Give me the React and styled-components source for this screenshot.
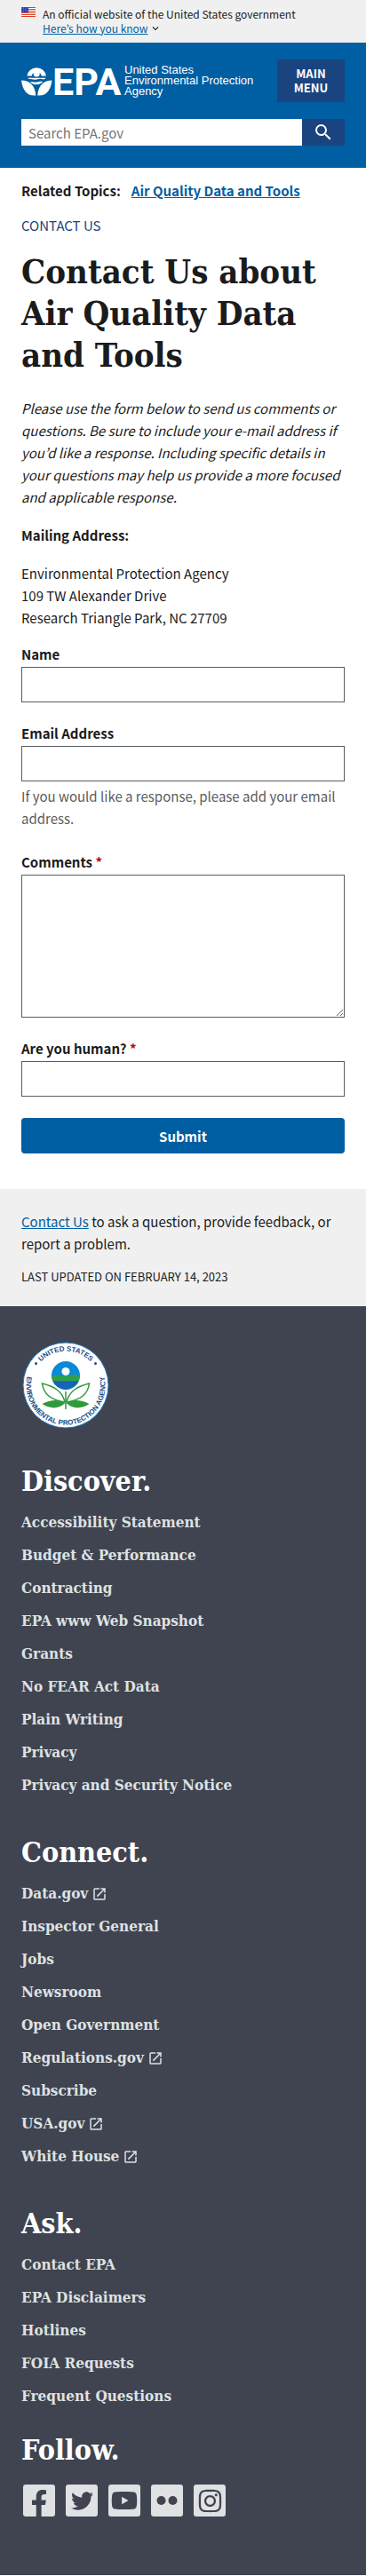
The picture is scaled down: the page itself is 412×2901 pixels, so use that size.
import React from "react";
import styled, { createGlobalStyle } from "styled-components";
import { MdSearch, MdOpenInNew, MdExpandMore } from "react-icons/md";
import { FaFacebookF, FaTwitter, FaYoutube, FaInstagram } from "react-icons/fa";

const sans = `"Noto Sans CJK KR", "Noto Sans", sans-serif`;
const serif = `"DejaVu Serif Condensed", "DejaVu Serif", serif`;

const GlobalStyle = createGlobalStyle`
  *, *::before, *::after { box-sizing: border-box; }
  body {
    margin: 0;
    background: #fff;
    color: #1b1b1b;
    font-family: ${sans};
    font-size: 15px;
    line-height: 25px;
  }
  button, input, textarea { font: inherit; border-radius: 0; margin: 0; }
`;

const Banner = styled.section`
  display: flex;
  gap: 8px;
  padding: 8px 24px;
  background: #f0f0f0;
  font-size: 12px;
  line-height: 16px;
`;

const FlagIcon = styled.svg`
  flex: none;
  width: 16px;
  height: 11px;
`;

const BannerToggle = styled.button`
  display: flex;
  align-items: center;
  gap: 2px;
  padding: 0;
  border: 0;
  background: none;
  color: #005ea2;
  cursor: pointer;

  span { text-decoration: underline; }
  svg { color: #1b1b1b; }
`;

const Header = styled.header`
  display: flex;
  flex-direction: column;
  gap: 19px;
  padding: 19px 24px 25px;
  background: #005ea2;
`;

const HeaderTop = styled.div`
  display: flex;
  align-items: center;
  justify-content: space-between;
`;

const LogoLink = styled.a`
  display: flex;
  align-items: center;
  gap: 3px;
  color: #fff;
  text-decoration: none;
`;

const LogoMark = styled.svg`
  width: 113px;
  height: 36px;
  overflow: visible;
`;

const Tagline = styled.span`
  font: 13px/12px "Liberation Sans", sans-serif;
  white-space: nowrap;
`;

const MenuButton = styled.button`
  width: 76px;
  padding: 8px;
  border: 0;
  background: #1a4480;
  color: #fff;
  font-size: 13px;
  font-weight: 700;
  line-height: 16px;
  text-transform: uppercase;
  cursor: pointer;
`;

const SearchForm = styled.form`
  display: flex;
  height: 30px;
`;

const SearchInput = styled.input`
  flex: 1;
  min-width: 0;
  padding: 0 8px;
  border: 0;
  background: #fff;

  &::placeholder { color: #757575; opacity: 1; }
`;

const SearchButton = styled.button`
  display: grid;
  place-items: center;
  width: 48px;
  padding: 0;
  border: 0;
  background: #1a4480;
  color: #fff;
`;

const Main = styled.main`
  padding: 13px 24px 40px;
`;

const TextLink = styled.a`
  color: #005ea2;
`;

const RelatedTopics = styled.p`
  display: flex;
  gap: 12px;
  margin: 0 0 14px;
  font-weight: 700;
`;

const WebArea = styled.p`
  margin: 0;
  color: #1a4480;
  text-transform: uppercase;
`;

const PageTitle = styled.h1`
  margin: 16px 0 24px;
  font-family: ${serif};
  font-size: 38px;
  font-weight: 700;
  line-height: 47px;
`;

const Paragraph = styled.p`
  margin: 0 0 18px;
  font-style: ${(p) => (p.$emphasis ? "italic" : "normal")};
  font-weight: ${(p) => (p.$strong ? 700 : 400)};
`;

const Form = styled.form`
  display: flex;
  flex-direction: column;
  gap: 24px;
`;

const Field = styled.div`
  display: flex;
  flex-direction: column;
`;

const Label = styled.label`
  margin-bottom: 3px;
  font-weight: 700;
  line-height: 22px;
`;

const Required = styled.abbr`
  color: #b50909;
  text-decoration: none;
`;

const TextInput = styled.input`
  width: 100%;
  height: 40px;
  padding: 8px;
  border: 1px solid #565c65;
  background: #fff;
`;

const TextArea = styled.textarea`
  width: 100%;
  height: 161px;
  padding: 8px;
  border: 1px solid #565c65;
  background: #fff;
  resize: vertical;
`;

const Hint = styled.span`
  padding: 4px 0 2px;
  color: #5c5c5c;
`;

const SubmitButton = styled.button`
  width: 100%;
  height: 40px;
  padding: 0;
  border: 0;
  border-radius: 4px;
  background: #005ea2;
  color: #fff;
  font-weight: 700;
`;

const PageFooter = styled.section`
  padding: 24px 24px 21px;
  background: #f0f0f0;
`;

const Updated = styled.p`
  margin: 12px 0 0;
  font-size: 13px;
  text-transform: uppercase;
`;

const Footer = styled.footer`
  padding: 39px 24px 66px;
  background: #3f4450;
  color: #dfe1e2;
`;

const Seal = styled.svg`
  display: block;
  width: 100px;
  height: 100px;
  margin-bottom: 40px;
`;

const FooterSection = styled.section`
  margin-bottom: ${(p) => (p.$tight ? 32 : 47)}px;
`;

const FooterHeading = styled.h2`
  margin: 0 0 18px;
  color: #fff;
  font-family: ${serif};
  font-size: 32px;
  font-weight: 700;
  line-height: 36px;
`;

const LinkList = styled.ul`
  display: flex;
  flex-direction: column;
  gap: 16px;
  margin: 0;
  padding: 0;
  list-style: none;
`;

const FooterLink = styled.a`
  display: inline-flex;
  align-items: center;
  gap: 4px;
  color: #dfe1e2;
  font-family: ${serif};
  font-size: 17px;
  font-weight: 700;
  line-height: 21px;
  text-decoration: none;
  vertical-align: top;
`;

const LinkItem = styled.li`
  line-height: 21px;
`;

const SocialList = styled.ul`
  display: flex;
  gap: 12px;
  margin: 0;
  padding: 3px 2px 0;
  list-style: none;
`;

const SocialLink = styled.a`
  display: flex;
  align-items: ${(p) => (p.$bottom ? "flex-end" : "center")};
  justify-content: center;
  width: 36px;
  height: 36px;
  overflow: hidden;
  border-radius: 3px;
  background: #dfe1e2;
  color: #3f4450;
`;

const Flag = () => (
  <FlagIcon viewBox="0 0 16 11" aria-hidden="true">
    <rect width="16" height="11" fill="#fff" />
    {[0, 2, 4, 6, 8, 10].map((y) => (
      <rect key={y} y={y} width="16" height="1" fill="#db3e1f" />
    ))}
    <rect width="8" height="6" fill="#1e33b1" />
    {[1, 3, 5].map((y) =>
      [1, 3, 5, 7].map((x) => <circle key={`${x}-${y}`} cx={x - (y === 3 ? 0 : 0.4)} cy={y} r="0.45" fill="#fff" />)
    )}
  </FlagIcon>
);

const EpaLogo = () => (
  <LogoMark viewBox="0 0 113 36" role="img" aria-label="EPA">
    <g fill="#fff">
      <path d="M6.5 12.5a10.8 10.8 0 0 1 21.4 0h-5.2a5.6 5.6 0 0 0-11 0z" />
      <circle cx="17.2" cy="10" r="3.6" />
      <path d="M7 14.8h20.5c-1 1.8-2.6 1.6-4.6 1.2-3.6-.8-5 1.3-9 .5-2.6-.5-5.4.2-6.9-1.7z" />
      <path d="M10 19.5c2.6-.8 4 .4 7 .1 2.8-.3 4.2-1.2 7.2-.6-3.6 4-10.2 4.500-14.2.5z" />
      <path d="M0 17.5c9 0 15.5 5.5 16.3 17C6.5 35.5 1.5 29 0 17.5z" />
      <path d="M34.5 17.5c-9 0-15.500 5.5-16.3 17 9.8 1 14.8-5.5 16.3-17z" />
    </g>
    <text x="35" y="34" fill="#fff" fontFamily="'Liberation Sans Narrow', Roboto, sans-serif" fontSize="43" fontWeight="700">
      EPA
    </text>
  </LogoMark>
);

const EpaSeal = () => (
  <Seal viewBox="0 0 100 100" role="img" aria-label="United States Environmental Protection Agency">
    <defs>
      <path id="seal-top" d="M11.5 50a38.5 38.5 0 0 1 77 0" />
      <path id="seal-ring" d="M15.4 22.3A44.5 44.5 0 1 0 84.6 22.3" />
    </defs>
    <circle cx="50" cy="50" r="48" fill="#fff" stroke="#1b75b5" strokeWidth="1" />
    <g fill="#1a4e8c" fontFamily="'Liberation Sans', sans-serif" fontSize="8" fontWeight="700">
      <text textAnchor="middle">
        <textPath href="#seal-top" startOffset="50%">UNITED STATES</textPath>
      </text>
      <text textAnchor="middle">
        <textPath href="#seal-ring" startOffset="50%">ENVIRONMENTAL PROTECTION AGENCY</textPath>
      </text>
    </g>
    <circle cx="16.5" cy="25.5" r="1.5" fill="#1a4e8c" />
    <circle cx="83.5" cy="25.5" r="1.5" fill="#1a4e8c" />
    <circle cx="50" cy="39" r="16" fill="#0a8ad6" />
    <path d="M34 39.5c6-2.5 11 1 17-.3 6-1.2 10-1 15 0-.1 2-.5 4-1.3 5.8-10 .8-19 .8-29.4 0-.8-1.7-1.200-3.5-1.3-5.5z" fill="#2fa04a" />
    <path d="M35.3 45c10 .8 19.4.8 29.4 0A16 16 0 0 1 35.3 45z" fill="#1465b4" />
    <circle cx="50" cy="34.5" r="4.5" fill="#fff" />
    <g stroke="#2f9a3c" strokeWidth="1.5" fill="#fff">
      <path d="M49 69C46 56 36 51 23.5 48 25 61 35 67 49 69z" />
      <path d="M51 69C54 56 64 51 76.5 48 75 61 65 67 51 69z" />
    </g>
    <path d="M49.5 70C43 66 33 66 23.5 71c9 6 19 6 26-1z" fill="#2f9a3c" />
    <path d="M50.5 70C57 66 67 66 76.5 71c-9 6-19 6-26-1z" fill="#2f9a3c" />
    <path d="M50 57v20" stroke="#2f9a3c" strokeWidth="1.5" />
  </Seal>
);

const FlickrDots = () => (
  <svg width="24" height="24" viewBox="0 0 24 24" fill="currentColor" aria-hidden="true">
    <circle cx="5.5" cy="12" r="5" />
    <circle cx="18.5" cy="12" r="5" />
  </svg>
);

const footerGroups = [
  {
    title: "Discover.",
    links: [
      ["Accessibility Statement"],
      ["Budget & Performance"],
      ["Contracting"],
      ["EPA www Web Snapshot"],
      ["Grants"],
      ["No FEAR Act Data"],
      ["Plain Writing"],
      ["Privacy"],
      ["Privacy and Security Notice"],
    ],
  },
  {
    title: "Connect.",
    links: [
      ["Data.gov", true],
      ["Inspector General"],
      ["Jobs"],
      ["Newsroom"],
      ["Open Government"],
      ["Regulations.gov", true],
      ["Subscribe"],
      ["USA.gov", true],
      ["White House", true],
    ],
  },
  {
    title: "Ask.",
    tight: true,
    links: [["Contact EPA"], ["EPA Disclaimers"], ["Hotlines"], ["FOIA Requests"], ["Frequent Questions"]],
  },
];

const socials = [
  { name: "Facebook", icon: <FaFacebookF size={30} />, bottom: true },
  { name: "Twitter", icon: <FaTwitter size={25} /> },
  { name: "YouTube", icon: <FaYoutube size={30} /> },
  { name: "Flickr", icon: <FlickrDots /> },
  { name: "Instagram", icon: <FaInstagram size={29} /> },
];

export default function App() {
  return (
    <>
      <GlobalStyle />
      <Banner aria-label="Official government website">
        <Flag />
        <div>
          An official website of the United States government
          <BannerToggle type="button">
            <span>Here’s how you know</span>
            <MdExpandMore size={14} />
          </BannerToggle>
        </div>
      </Banner>

      <Header>
        <HeaderTop>
          <LogoLink href="#home">
            <EpaLogo />
            <Tagline>
              United States
              <br />
              Environmental Protection
              <br />
              Agency
            </Tagline>
          </LogoLink>
          <MenuButton type="button">Main Menu</MenuButton>
        </HeaderTop>
        <SearchForm role="search">
          <SearchInput type="search" aria-label="Search EPA.gov" placeholder="Search EPA.gov" />
          <SearchButton type="submit" aria-label="Search">
            <MdSearch size={24} />
          </SearchButton>
        </SearchForm>
      </Header>

      <Main>
        <RelatedTopics>
          <span>Related Topics:</span>
          <TextLink href="#air-data">Air Quality Data and Tools</TextLink>
        </RelatedTopics>
        <WebArea>Contact Us</WebArea>
        <PageTitle>Contact Us about Air Quality Data and Tools</PageTitle>
        <Paragraph $emphasis>
          Please use the form below to send us comments or questions. Be sure to include your e-mail address if you’d
          like a response. Including specific details in your questions may help us provide a more focused and
          applicable response.
        </Paragraph>
        <Paragraph $strong>Mailing Address:</Paragraph>
        <Paragraph>
          Environmental Protection Agency
          <br />
          109 TW Alexander Drive
          <br />
          Research Triangle Park, NC 27709
        </Paragraph>

        <Form>
          <Field>
            <Label htmlFor="name">Name</Label>
            <TextInput id="name" type="text" />
          </Field>
          <Field>
            <Label htmlFor="email">Email Address</Label>
            <TextInput id="email" type="email" aria-describedby="email-hint" />
            <Hint id="email-hint">If you would like a response, please add your email address.</Hint>
          </Field>
          <Field>
            <Label htmlFor="comments">
              Comments <Required title="required">*</Required>
            </Label>
            <TextArea id="comments" required />
          </Field>
          <Field>
            <Label htmlFor="human">
              Are you human? <Required title="required">*</Required>
            </Label>
            <TextInput id="human" type="text" required />
          </Field>
          <SubmitButton type="submit">Submit</SubmitButton>
        </Form>
      </Main>

      <PageFooter>
        <TextLink href="#contact">Contact Us</TextLink> to ask a question, provide feedback, or report a problem.
        <Updated>Last updated on February 14, 2023</Updated>
      </PageFooter>

      <Footer>
        <EpaSeal />
        {footerGroups.map((group) => (
          <FooterSection key={group.title} $tight={group.tight}>
            <FooterHeading>{group.title}</FooterHeading>
            <LinkList>
              {group.links.map(([label, external]) => (
                <LinkItem key={label}>
                  <FooterLink href="#">
                    {label}
                    {external && <MdOpenInNew size={18} aria-label="external link" />}
                  </FooterLink>
                </LinkItem>
              ))}
            </LinkList>
          </FooterSection>
        ))}
        <FooterHeading>Follow.</FooterHeading>
        <SocialList>
          {socials.map((s) => (
            <li key={s.name}>
              <SocialLink href="#" aria-label={s.name} $bottom={s.bottom}>
                {s.icon}
              </SocialLink>
            </li>
          ))}
        </SocialList>
      </Footer>
    </>
  );
}
